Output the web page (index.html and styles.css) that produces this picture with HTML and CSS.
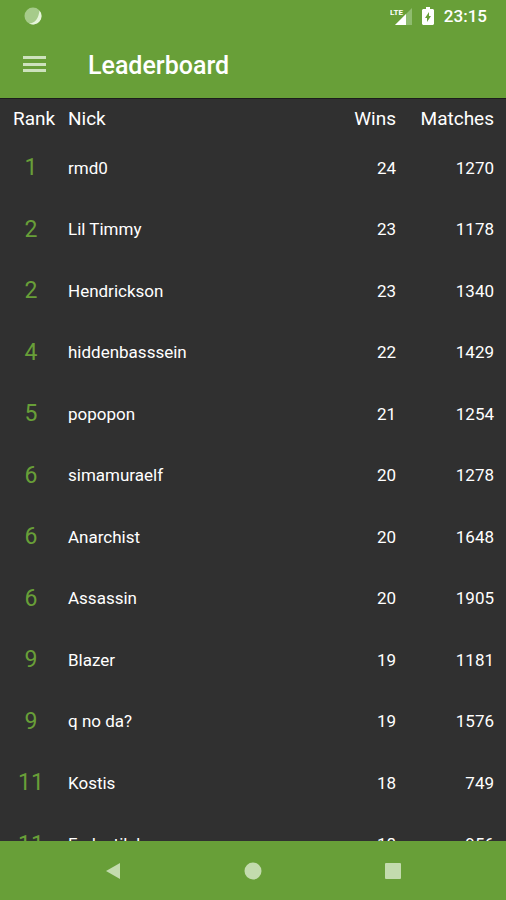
FILE: index.html
```html
<!DOCTYPE html>
<html lang="en">
<head>
  <meta charset="UTF-8" />
  <meta name="viewport" content="width=device-width, initial-scale=1.0" />
  <title>Leaderboard</title>
  <link rel="stylesheet" href="styles.css">
</head>
<body>
  <div class="status-bar">
    <svg class="spinner" width="18" height="18" viewBox="0 0 18 18">
      <circle cx="9" cy="9" r="8.5" fill="#a6cb8a" />
      <path d="M15.5 3.5A8.5 8.5 0 0 1 5 16.5Q14 16 15.5 3.5z" fill="#e6f5da" />
    </svg>
    <div class="status-icons">
      <svg width="22" height="18" viewBox="0 0 22 18">
        <path d="M22 1v17H5z" fill="#8fbc6f" />
        <path d="M16 7v11H5z" fill="#fff" />
        <text class="lte" x="0" y="8">LTE</text>
      </svg>
      <svg width="12" height="18" viewBox="0 0 12 18">
        <path d="M4 0h4v2h3l1 1v14l-1 1H1l-1-1V3l1-1h3z" fill="#fff" />
        <path d="M7 5L3 11h2v4l4-6H7z" fill="#689f38" />
      </svg>
      <span class="clock">23:15</span>
    </div>
  </div>

  <header class="app-bar">
    <button class="menu" aria-label="Open menu">
      <svg width="24" height="18" viewBox="0 0 24 18">
        <path d="M0 0h23v3H0zM0 7h23v3H0zM0 13h23v3H0z" fill="#cde2bd" />
      </svg>
    </button>
    <h1>Leaderboard</h1>
  </header>

  <main>
    <table>
      <thead>
        <tr><th class="rank">Rank</th><th class="nick">Nick</th><th class="wins">Wins</th><th class="matches">Matches</th></tr>
      </thead>
      <tbody>
        <tr><td class="rank">1</td><td>rmd0</td><td class="wins">24</td><td class="matches">1270</td></tr>
        <tr><td class="rank">2</td><td>Lil Timmy</td><td class="wins">23</td><td class="matches">1178</td></tr>
        <tr><td class="rank">2</td><td>Hendrickson</td><td class="wins">23</td><td class="matches">1340</td></tr>
        <tr><td class="rank">4</td><td>hiddenbasssein</td><td class="wins">22</td><td class="matches">1429</td></tr>
        <tr><td class="rank">5</td><td>popopon</td><td class="wins">21</td><td class="matches">1254</td></tr>
        <tr><td class="rank">6</td><td>simamuraelf</td><td class="wins">20</td><td class="matches">1278</td></tr>
        <tr><td class="rank">6</td><td>Anarchist</td><td class="wins">20</td><td class="matches">1648</td></tr>
        <tr><td class="rank">6</td><td>Assassin</td><td class="wins">20</td><td class="matches">1905</td></tr>
        <tr><td class="rank">9</td><td>Blazer</td><td class="wins">19</td><td class="matches">1181</td></tr>
        <tr><td class="rank">9</td><td>q no da?</td><td class="wins">19</td><td class="matches">1576</td></tr>
        <tr><td class="rank">11</td><td>Kostis</td><td class="wins">18</td><td class="matches">749</td></tr>
        <tr><td class="rank">11</td><td>Fedestilske</td><td class="wins">18</td><td class="matches">956</td></tr>
      </tbody>
    </table>
  </main>

  <nav class="nav-bar">
    <button aria-label="Back">
      <svg width="16" height="18" viewBox="0 0 16 18"><path d="M15 1v16L1 9z" fill="#c3dbae" /></svg>
    </button>
    <button aria-label="Home">
      <svg width="18" height="18" viewBox="0 0 18 18"><circle cx="9" cy="9" r="8.5" fill="#c3dbae" /></svg>
    </button>
    <button aria-label="Recent apps">
      <svg width="16" height="16" viewBox="0 0 16 16"><rect width="16" height="16" rx="1" fill="#c3dbae" /></svg>
    </button>
  </nav>
</body>
</html>
```
FILE: styles.css
```css
* {
  box-sizing: border-box;
}
body {
  margin: 0;
  height: 100vh;
  display: flex;
  flex-direction: column;
  font-family: Roboto, sans-serif;
  background-color: #303030;
  color: #fff;
}
button {
  display: flex;
  align-items: center;
  justify-content: center;
  padding: 0;
  border: none;
  background: none;
  cursor: pointer;
}
.status-bar {
  flex: none;
  display: flex;
  align-items: center;
  justify-content: space-between;
  height: 32px;
  padding: 0 19px 0 24px;
  background-color: #689f38;
}
.status-icons {
  display: flex;
  align-items: center;
  gap: 10px;
}
.lte {
  font-family: "Liberation Sans Narrow", Roboto, sans-serif;
  font-size: 8px;
  font-weight: bold;
  fill: #fff;
}
.clock {
  font-size: 17px;
  font-weight: 500;
}
.app-bar {
  flex: none;
  display: flex;
  align-items: center;
  gap: 29px;
  height: 66px;
  padding: 0 11px;
  background-color: #689f38;
}
.menu {
  width: 48px;
  height: 48px;
}
h1 {
  margin: 0;
  font-size: 25px;
  font-weight: 500;
}
main {
  flex: 1;
  min-height: 0;
  overflow: hidden;
  border-top: 1px solid #1c1c1c;
}
table {
  width: 100%;
  table-layout: fixed;
  border-collapse: collapse;
}
th, td {
  padding: 0;
  text-align: left;
  font-size: 17px;
  font-weight: 400;
  white-space: nowrap;
}
th {
  height: 38px;
  font-size: 19px;
}
td {
  height: 61px;
}
tr:nth-child(even) td {
  height: 62px;
}
.rank {
  width: 68px;
}
th.rank {
  padding-left: 13px;
}
td.rank {
  padding-right: 6px;
  text-align: center;
  font-size: 23px;
  color: #689f38;
}
.wins {
  width: 70px;
  text-align: right;
}
.matches {
  width: 110px;
  padding-right: 12px;
  text-align: right;
}
.nav-bar {
  flex: none;
  display: flex;
  align-items: center;
  justify-content: center;
  gap: 92px;
  height: 59px;
  background-color: #689f38;
}
.nav-bar button {
  width: 48px;
  height: 48px;
}
```
